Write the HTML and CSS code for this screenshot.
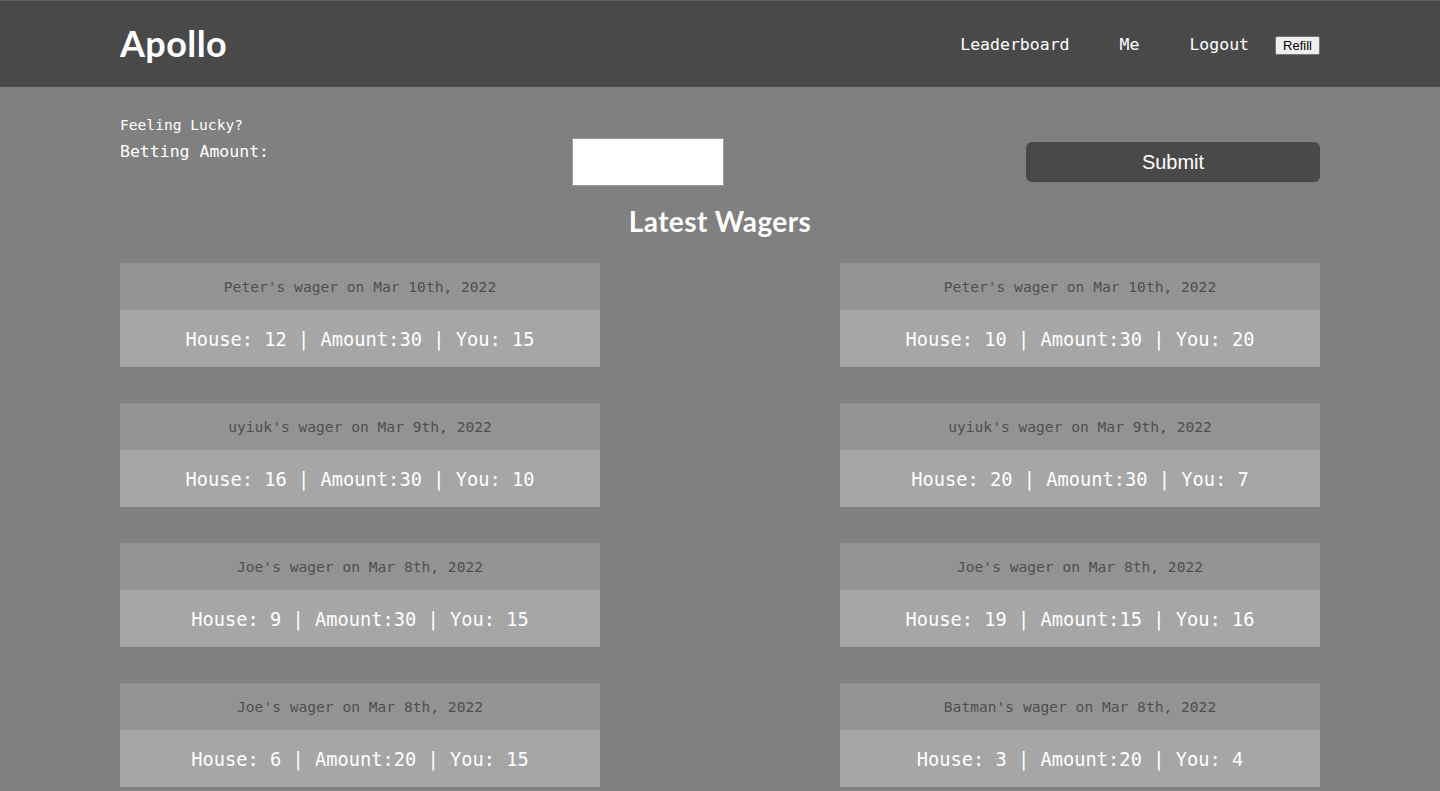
FILE: index.html
```html
<!DOCTYPE html>
<html>
<head>
<meta charset="utf-8">
<title>Apollo</title>
<link rel="stylesheet" href="styles.css">
</head>
<body>
<header class="topbar">
  <div class="topbar-inner">
    <div class="brand">Apollo</div>
    <nav class="nav">
      <a class="nav-link" href="#">Leaderboard</a>
      <a class="nav-link" href="#">Me</a>
      <a class="nav-link" href="#">Logout</a>
      <button class="refill">Refill</button>
    </nav>
  </div>
</header>
<main class="main">
  <form class="bet-form">
    <div class="bet-labels">
      <div class="lucky">Feeling Lucky?</div>
      <label class="bet-label">Betting Amount:</label>
    </div>
    <input class="bet-input" type="text">
    <button class="submit" type="button">Submit</button>
  </form>
  <h2 class="section-title">Latest Wagers</h2>
  <div class="wagers">
    <div class="card"><div class="card-head">Peter's wager on Mar 10th, 2022</div><div class="card-body">House: 12 | Amount:30 | You: 15</div></div>
    <div class="card"><div class="card-head">Peter's wager on Mar 10th, 2022</div><div class="card-body">House: 10 | Amount:30 | You: 20</div></div>
    <div class="card"><div class="card-head">uyiuk's wager on Mar 9th, 2022</div><div class="card-body">House: 16 | Amount:30 | You: 10</div></div>
    <div class="card"><div class="card-head">uyiuk's wager on Mar 9th, 2022</div><div class="card-body">House: 20 | Amount:30 | You: 7</div></div>
    <div class="card"><div class="card-head">Joe's wager on Mar 8th, 2022</div><div class="card-body">House: 9 | Amount:30 | You: 15</div></div>
    <div class="card"><div class="card-head">Joe's wager on Mar 8th, 2022</div><div class="card-body">House: 19 | Amount:15 | You: 16</div></div>
    <div class="card"><div class="card-head">Joe's wager on Mar 8th, 2022</div><div class="card-body">House: 6 | Amount:20 | You: 15</div></div>
    <div class="card"><div class="card-head">Batman's wager on Mar 8th, 2022</div><div class="card-body">House: 3 | Amount:20 | You: 4</div></div>
  </div>
</main>
</body>
</html>
```

FILE: styles.css
```css
* { box-sizing: border-box; }
html, body { margin: 0; padding: 0; }
body {
  background: #808080;
  font-family: "DejaVu Sans Mono", monospace;
  color: #fff;
}
.topbar {
  background: #494949;
  border-top: 1px solid #5e5e5e;
  height: 87px;
}
.topbar-inner {
  width: 1200px;
  margin: 0 auto;
  height: 86px;
  display: flex;
  align-items: center;
  justify-content: space-between;
}
.brand {
  font-family: Lato, "Open Sans", sans-serif;
  font-weight: 700;
  font-size: 36px;
  color: #fff;
  letter-spacing: 0.4px;
  margin-top: -2px;
}
.nav {
  display: flex;
  align-items: center;
}
.nav-link {
  color: #fff;
  text-decoration: none;
  font-family: "DejaVu Sans Mono", monospace;
  font-size: 16.5px;
  margin-left: 50px;
}
.nav-link:first-child { margin-left: 0; }
.refill {
  margin-left: 26px;
  margin-top: 3px;
  font-family: "Liberation Sans", Arial, sans-serif;
  font-size: 13px;
  padding: 1px 7px;
  height: 19px;
  width: 45px;
  background: #efefef;
  border: 1px solid #767676;
  border-radius: 2px;
  color: #000;
  line-height: 15px;
}
.main {
  width: 1200px;
  margin: 0 auto;
}
.bet-form {
  display: flex;
  justify-content: space-between;
  align-items: flex-start;
  padding-top: 28px;
}
.bet-labels { width: 150px; }
.lucky {
  font-size: 14.6px;
  line-height: 20px;
}
.bet-label {
  display: block;
  font-size: 16.5px;
  line-height: 20px;
  margin-top: 7px;
  white-space: nowrap;
}
.bet-input {
  width: 152px;
  height: 48px;
  margin-top: 23px;
  background: #fff;
  border: 1px solid #999;
  outline: none;
}
.submit {
  width: 294px;
  height: 40px;
  margin-top: 27px;
  background: #494949;
  color: #fff;
  border: none;
  border-radius: 6px;
  font-family: "Liberation Sans", Arial, sans-serif;
  font-size: 20px;
}
.section-title {
  text-align: center;
  font-family: Lato, "Open Sans", sans-serif;
  font-weight: 700;
  font-size: 28px;
  letter-spacing: 0.4px;
  line-height: 34px;
  margin: 18px 0 25px;
  color: #fff;
}
.wagers {
  display: grid;
  grid-template-columns: 480px 480px;
  justify-content: space-between;
  row-gap: 36px;
}
.card-head {
  background: #939393;
  color: #4f4f4f;
  height: 47px;
  display: flex;
  align-items: center;
  justify-content: center;
  font-size: 14.6px;
}
.card-body {
  background: #a6a6a6;
  color: #fff;
  height: 57px;
  display: flex;
  align-items: center;
  justify-content: center;
  font-size: 18.7px;
  padding-top: 2px;
}
```
